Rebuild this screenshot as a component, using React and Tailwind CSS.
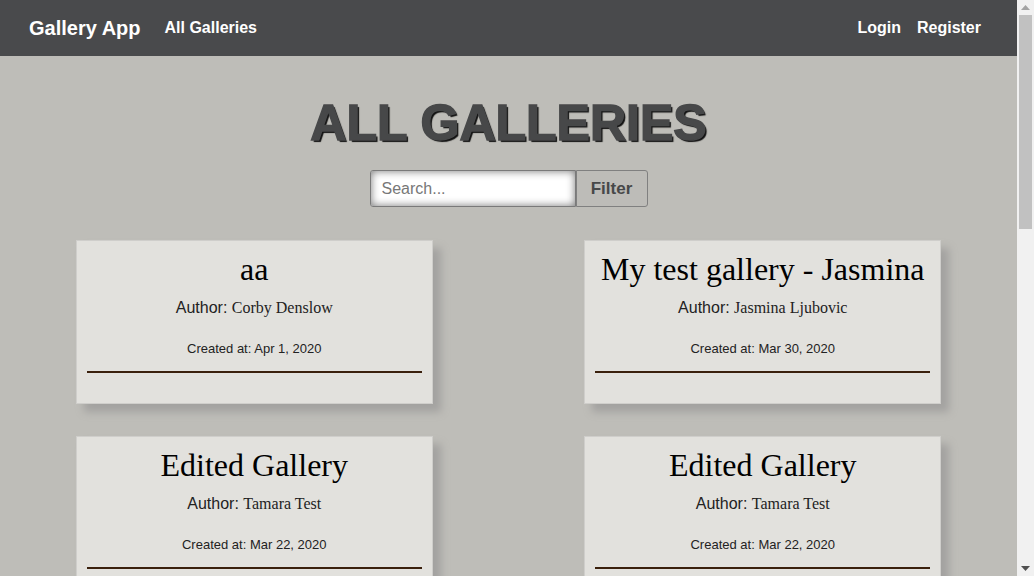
import React from "react";

const galleries = [
  { id: 1, title: "aa", author: "Corby Denslow", created: "Apr 1, 2020" },
  { id: 2, title: "My test gallery - Jasmina", author: "Jasmina Ljubovic", created: "Mar 30, 2020" },
  { id: 3, title: "Edited Gallery", author: "Tamara Test", created: "Mar 22, 2020" },
  { id: 4, title: "Edited Gallery", author: "Tamara Test", created: "Mar 22, 2020" },
];

const sans = "font-['Liberation_Sans',Arial,sans-serif]";
const serif = "font-['Liberation_Serif','Times_New_Roman',serif]";

// kartica jedne galerije
const GalleryCard = ({ gallery }) => (
  <div className="w-[357px] bg-[#e2e1dd] border border-[#cfcecb] shadow-[8px_8px_8px_#a3a2a0] pt-[10px] pb-[30px] text-center">
    <h2 className={`${serif} text-[32px] leading-[36px] text-black whitespace-nowrap`}>{gallery.title}</h2>
    <p className="mt-[11px] text-[16px] leading-[20px] text-[#222]">
      <span className={sans}>Author: </span>
      <span className={serif}>{gallery.author}</span>
    </p>
    <p className={`${sans} mt-[23px] text-[13px] leading-[16px] text-[#222]`}>
      Created at: {gallery.created}
    </p>
    <hr className="mt-[14px] mx-[10px] border-0 h-[2px] bg-[#3a200c]" />
  </div>
);

// lazni scrollbar sa desne strane
const Scrollbar = () => (
  <div className="w-[17px] shrink-0 bg-[#f1f1f1] flex flex-col items-center">
    <div className="h-[15px] flex items-center justify-center">
      <svg width="9" height="5" viewBox="0 0 9 5"><path d="M0 5 L4.5 0 L9 5 Z" fill="#a3a3a3" /></svg>
    </div>
    <div className="w-[13px] h-[214px] bg-[#c1c1c1]" />
    <div className="flex-1" />
    <div className="h-[15px] flex items-center justify-center">
      <svg width="9" height="5" viewBox="0 0 9 5"><path d="M0 0 L9 0 L4.5 5 Z" fill="#505050" /></svg>
    </div>
  </div>
);

export default function App() {
  return (
    <div className={`${sans} h-screen flex overflow-hidden`}>
      <div className="flex-1 min-w-0 bg-[#bebdb8] overflow-hidden">
        {/* navigacija */}
        <nav className="h-14 bg-[#494a4c] flex items-center justify-between pl-[29px] pr-[36px] text-white font-bold">
          <div className="flex items-center gap-[24px]">
            <span className="text-[20px]">Gallery App</span>
            <span className="text-[16px]">All Galleries</span>
          </div>
          <div className="flex items-center gap-[16px] text-[16px]">
            <span>Login</span>
            <span>Register</span>
          </div>
        </nav>

        <h1 className="mt-[42px] text-center text-[50px] leading-none font-black text-[#474849] [-webkit-text-stroke:1.5px_#474849] [text-shadow:2px_2px_1px_#111]">
          ALL GALLERIES
        </h1>

        {/* pretraga */}
        <div className="mt-[22px] flex justify-center">
          <input
            type="text"
            placeholder="Search..."
            className="w-[206px] h-[37px] px-[11px] bg-white border border-[#7a7a7a] rounded-l-[3px] text-[16px] text-[#333] placeholder:text-[#777] shadow-[inset_0_0_9px_#777] outline-none"
          />
          <button className="w-[72px] h-[37px] bg-[#bdbcb8] border border-[#808080] rounded-r-[3px] text-[17px] font-bold text-[#474849]">
            Filter
          </button>
        </div>

        {/* lista galerija */}
        <div className="mt-[33px] grid grid-cols-2 gap-y-[32px] pb-10">
          {galleries.map((g) => (
            <div key={g.id} className="flex justify-center">
              <GalleryCard gallery={g} />
            </div>
          ))}
        </div>
      </div>
      <Scrollbar />
    </div>
  );
}
